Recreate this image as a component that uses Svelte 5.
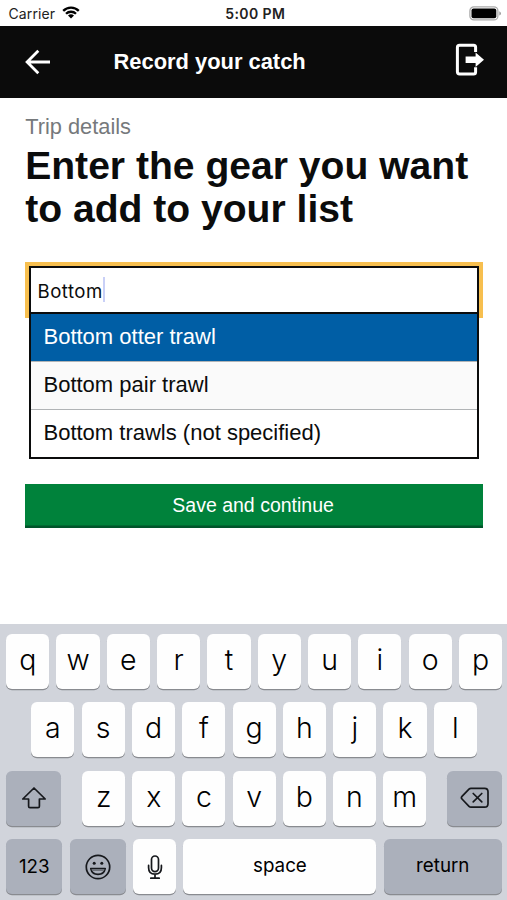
<script>
  let query = $state('Bottom');
  let selected = $state(0);

  const options = [
    'Bottom otter trawl',
    'Bottom pair trawl',
    'Bottom trawls (not specified)',
  ];

  const topRow = 'qwertyuiop'.split('');
  const middleRow = 'asdfghjkl'.split('');
  const bottomRow = 'zxcvbnm'.split('');

  function press(letter) {
    query += letter;
  }
</script>

<div class="screen">
  <div class="status-bar">
    <div class="carrier">
      <span class="carrier-name">Carrier</span>
      <svg class="wifi" viewBox="0 0 18 13" width="18" height="13">
        <path d="M1.2 4.9 A11 11 0 0 1 16.8 4.9" />
        <path d="M4 7.8 A7.1 7.1 0 0 1 14 7.8" />
        <path class="dot" d="M9 12.6 L6 9.6 A4.3 4.3 0 0 1 12 9.6 Z" />
      </svg>
    </div>
    <div class="time">5:00 PM</div>
    <svg class="battery" viewBox="0 0 33 15" width="33" height="15">
      <rect class="shell" x="0.9" y="0.9" width="28" height="13" rx="4" />
      <rect x="2.5" y="2.5" width="24.8" height="9.8" rx="2" />
      <path class="tip" d="M30.3 5.3 Q32 6 32 7.4 Q32 8.8 30.3 9.5 Z" />
    </svg>
  </div>

  <header class="app-bar">
    <button class="icon-button" aria-label="Back">
      <svg viewBox="0 0 26 26" width="26" height="26">
        <path class="arrow" d="M25 13 H2.5 M13.3 1.8 L2.1 13 L13.3 24.2" />
      </svg>
    </button>
    <h2 class="app-title">Record your catch</h2>
    <button class="icon-button" aria-label="Sign out">
      <svg viewBox="0 0 30 34" width="30" height="34">
        <path class="door" d="M20.6 9 V4.3 Q20.6 2.3 18.6 2.3 H4.6 Q2.4 2.3 2.4 4.5 V28.7 Q2.4 30.9 4.6 30.9 H18.6 Q20.6 30.9 20.6 28.9 V24.2" />
        <path class="exit" d="M10.6 13.6 H20.6 V9.6 L29 16.8 L20.6 24 V20 H10.6 Z" />
      </svg>
    </button>
  </header>

  <main class="content">
    <span class="caption">Trip details</span>
    <h1 class="heading">Enter the gear you want to add to your list</h1>

    <div class="autocomplete">
      <div class="field"><span class="field-text">{query}</span><span class="caret"></span></div>
      <ul class="menu">
        {#each options as option, i}
          <li class="option" class:selected={i === selected} class:striped={i === 1}>{option}</li>
        {/each}
      </ul>
    </div>

    <button class="save">Save and continue</button>
  </main>

  <div class="keyboard">
    <div class="row">
      {#each topRow as letter}
        <button class="key" onclick={() => press(letter)}>{letter}</button>
      {/each}
    </div>
    <div class="row indented">
      {#each middleRow as letter}
        <button class="key" onclick={() => press(letter)}>{letter}</button>
      {/each}
    </div>
    <div class="row spread">
      <button class="key dark modifier" aria-label="Shift">
        <svg viewBox="0 0 26 24" width="26" height="24">
          <path d="M13 2 L24.2 13 H18.4 V20.2 Q18.4 21.6 17 21.6 H9 Q7.6 21.6 7.6 20.2 V13 H1.8 Z" />
        </svg>
      </button>
      <div class="letters">
        {#each bottomRow as letter}
          <button class="key" onclick={() => press(letter)}>{letter}</button>
        {/each}
      </div>
      <button class="key dark modifier" aria-label="Delete">
        <svg viewBox="0 0 30 24" width="30" height="24">
          <path d="M11 2.3 H24.6 Q28 2.3 28 5.7 V17.7 Q28 21.1 24.6 21.1 H11 Q9.8 21.1 9 20.3 L2 13 Q0.8 11.7 2 10.4 L9 3.1 Q9.8 2.3 11 2.3 Z" />
          <path d="M13.2 7.5 L21.8 15.9 M21.8 7.5 L13.2 15.9" />
        </svg>
      </button>
    </div>
    <div class="row">
      <button class="key dark wide label numbers">123</button>
      <button class="key dark wide" aria-label="Emoji">
        <svg viewBox="0 0 28 28" width="28" height="28">
          <circle cx="14" cy="14" r="11.7" />
          <circle class="fill" cx="10.2" cy="10.2" r="1.5" />
          <circle class="fill" cx="17.8" cy="10.2" r="1.5" />
          <path d="M6.8 15.6 H21.2 Q20 21.4 14 21.4 Q8 21.4 6.8 15.6 Z" />
          <path class="teeth" d="M7.4 16 H20.6 L19.8 18 H8.2 Z" />
        </svg>
      </button>
      <button class="key" aria-label="Dictate">
        <svg viewBox="0 0 16 26" width="16" height="26">
          <rect x="4.5" y="2" width="7" height="15.6" rx="3.5" />
          <path d="M1.6 11.4 V13.8 Q1.6 20.2 8 20.2 Q14.4 20.2 14.4 13.8 V11.4 M8 20.2 V24 M3.8 24.2 H12.2" />
        </svg>
      </button>
      <button class="key label space">space</button>
      <button class="key dark label return">return</button>
    </div>
  </div>
</div>

<style>
  :global(body) {
    background: #fff;
    overflow: hidden;
  }

  .screen {
    display: flex;
    flex-direction: column;
    width: 507px;
    height: 900px;
    overflow: hidden;
    background: #fff;
    color: #0b0c0c;
    font-family: "Liberation Sans", Arial, sans-serif;
  }

  button {
    margin: 0;
    padding: 0;
    border: none;
    background: none;
    font: inherit;
    color: inherit;
  }

  svg {
    display: block;
  }

  /* Status bar */
  .status-bar {
    display: grid;
    grid-template-columns: 1fr auto 1fr;
    align-items: center;
    height: 25.5px;
    box-sizing: border-box;
    padding: 2px 5px 0 8.5px;
    font-family: Inter, sans-serif;
    font-size: 14px;
    color: #222;
  }

  .carrier {
    display: flex;
    align-items: center;
    gap: 6.5px;
  }

  .carrier-name {
    width: 47px;
    letter-spacing: 0.1px;
  }

  .wifi {
    margin-top: -2px;
    fill: none;
    stroke: #000;
    stroke-width: 2.3;
  }

  .wifi .dot {
    fill: #000;
    stroke: none;
  }

  .time {
    font-weight: 600;
    letter-spacing: 0.4px;
  }

  .battery {
    justify-self: end;
    margin-top: -1px;
  }

  .battery .shell {
    fill: none;
    stroke: #aaa;
    stroke-width: 1.3;
  }

  .battery .tip {
    fill: #999;
  }

  /* App bar */
  .app-bar {
    display: flex;
    align-items: center;
    height: 72.7px;
    box-sizing: border-box;
    padding: 0 22px 0 25px;
    background: #0b0b0b;
    color: #fff;
  }

  .app-title {
    flex: 1;
    margin: 0;
    padding-left: 62.5px;
    font-size: 21.9px;
    line-height: 26px;
    font-weight: 700;
  }

  .arrow {
    fill: none;
    stroke: #fff;
    stroke-width: 2.8;
  }

  .door {
    fill: none;
    stroke: #fff;
    stroke-width: 3;
  }

  .exit {
    fill: #fff;
  }

  .icon-button:last-child {
    margin-top: -3px;
  }

  /* Page content */
  .content {
    flex: 1;
    padding: 16px 24.5px 0 25.2px;
  }

  .caption {
    display: block;
    font-size: 21.8px;
    line-height: 26px;
    color: #76797c;
  }

  .heading {
    margin: 4px 0 0;
    font-size: 39.1px;
    line-height: 43px;
    font-weight: 700;
  }

  .autocomplete {
    margin: 36px 3.5px 0 3.8px;
  }

  .field {
    display: flex;
    align-items: center;
    height: 48px;
    box-sizing: border-box;
    padding: 2px 0 0 6.5px;
    border: 2.5px solid #0b0c0c;
    box-shadow: 0 0 0 4px #f7bf4f;
    font-family: Inter, sans-serif;
    font-size: 18.6px;
    letter-spacing: 0.5px;
  }

  .caret {
    width: 2px;
    height: 25px;
    margin-top: -3px;
    background: #c9d0f7;
  }

  .menu {
    position: relative;
    margin: 0;
    padding: 0;
    list-style: none;
    border: solid #0b0c0c;
    border-width: 0 2px 2px;
    background: #fff;
  }

  .option {
    height: 48px;
    box-sizing: border-box;
    padding-left: 12.5px;
    border-bottom: 1px solid #b1b4b6;
    font-size: 22px;
    line-height: 46px;
  }

  .option:last-child {
    border-bottom: none;
    height: 47px;
  }

  .option.striped {
    background: #fafafa;
  }

  .option.selected {
    background: #005ea5;
    color: #fff;
  }

  .save {
    display: block;
    width: 100%;
    height: 44.5px;
    margin-top: 24.5px;
    padding: 0 1.5px 1px 0;
    background: #00823b;
    box-shadow: inset 0 -2.5px 0 #00552b;
    font-size: 19.5px;
    color: #fff;
  }

  /* Keyboard */
  .keyboard {
    display: flex;
    flex-direction: column;
    gap: 13.5px;
    height: 276px;
    box-sizing: border-box;
    padding: 9.5px 5px 0 6.2px;
    background: #d1d4db;
    color: #000;
    font-family: Inter, sans-serif;
  }

  .row,
  .letters {
    display: flex;
    gap: 7.1px;
  }

  .indented {
    padding: 0 25px;
  }

  .spread {
    justify-content: space-between;
  }

  .letters {
    width: 344px;
  }

  .key {
    display: flex;
    flex: 1;
    align-items: center;
    justify-content: center;
    height: 55px;
    box-sizing: border-box;
    padding-bottom: 4px;
    border-radius: 6px;
    background: #fefefe;
    box-shadow: 0 1.3px 0 #898b90;
    font-size: 28.5px;
    font-weight: 300;
  }

  .key svg {
    margin-top: 4px;
    fill: none;
    stroke: #16181c;
    stroke-width: 1.7;
    stroke-linejoin: round;
    stroke-linecap: round;
  }

  .key svg .fill {
    fill: #16181c;
    stroke: none;
  }

  .key svg .teeth {
    fill: #6d7179;
    stroke: none;
  }

  .dark {
    background: #abb0bb;
  }

  .modifier {
    flex: 0 0 55px;
  }

  .wide {
    flex: 0 0 56.3px;
  }

  .label {
    padding-bottom: 3px;
    font-size: 18.8px;
    font-weight: 400;
  }

  .numbers {
    padding-bottom: 0;
  }

  .space {
    flex: 0 0 193px;
  }

  .return {
    flex: 0 0 118.5px;
  }
</style>
